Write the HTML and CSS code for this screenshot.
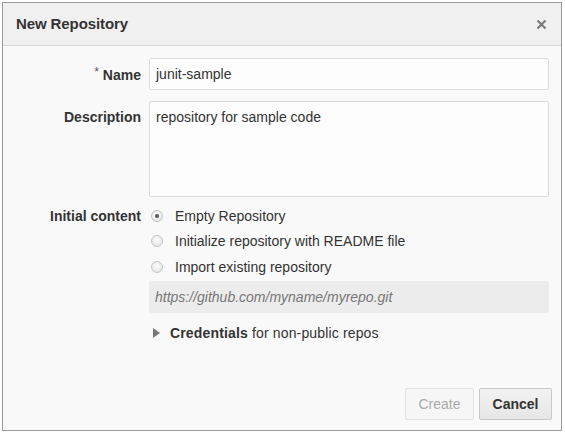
FILE: index.html
```html
<!DOCTYPE html>
<html>
<head>
<meta charset="utf-8">
<link rel="stylesheet" href="styles.css">
</head>
<body>
<div class="dialog">
  <div class="header">
    <span class="title">New Repository</span>
    <svg class="close" width="11" height="11" viewBox="0 0 11 11"><path d="M1.5 1.5 L9.5 9.5 M9.5 1.5 L1.5 9.5" stroke="#7a7a7a" stroke-width="2.2" fill="none"/></svg>
  </div>
  <div class="body">
    <div class="form">
      <label class="label label-name"><span class="req">*</span> Name</label>
      <div class="input">junit-sample</div>

      <label class="label label-desc">Description</label>
      <div class="textarea">repository for sample code</div>

      <label class="label label-init">Initial content</label>
      <div class="options">
        <div class="radio-row"><span class="radio checked"></span><span>Empty Repository</span></div>
        <div class="radio-row"><span class="radio"></span><span>Initialize repository with README file</span></div>
        <div class="radio-row"><span class="radio"></span><span>Import existing repository</span></div>
        <div class="url">https://github.com/myname/myrepo.git</div>
        <div class="creds"><span class="tri"></span><span><b>Credentials</b> for non-public repos</span></div>
      </div>
    </div>
    <div class="buttons">
      <button class="btn disabled">Create</button>
      <button class="btn primary">Cancel</button>
    </div>
  </div>
</div>
</body>
</html>
```
FILE: styles.css
```css
html, body {
  margin: 0;
  padding: 0;
  background: #ffffff;
}
body {
  font-family: "Liberation Sans", Arial, sans-serif;
  color: #333;
  font-size: 14px;
}
.dialog {
  margin: 2px 0 0 2px;
  width: 558px;
  height: 427px;
  border: 1px solid #9a9a9a;
  background: #f9f9f9;
  display: flex;
  flex-direction: column;
}
.header {
  height: 42px;
  background: #f0f0f0;
  border-bottom: 1px solid #d6d6d6;
  display: flex;
  align-items: center;
  justify-content: space-between;
  padding: 0 14px 0 13px;
}
.title {
  font-weight: bold;
  font-size: 15px;
  letter-spacing: -0.1px;
  color: #333;
  position: relative;
  top: -1px;
}
.close {
  display: block;
  position: relative;
  top: 0px;
}
.body {
  flex: 1;
  display: flex;
  flex-direction: column;
  padding: 12px 0 10px 0;
}
.form {
  display: grid;
  grid-template-columns: 138px 400px;
  column-gap: 8px;
  align-items: start;
}
.label {
  font-weight: bold;
  text-align: right;
  color: #333;
}
.label-name { padding-top: 7px; }
.label-desc { padding-top: 8px; margin-top: 11px; }
.label-init { padding-top: 5px; margin-top: 6px; }
.req {
  font-weight: normal;
  font-size: 12px;
  vertical-align: 4px;
  color: #555;
}
.input {
  height: 30px;
  box-sizing: content-box;
  border: 1px solid #dcdcdc;
  border-radius: 2px;
  background: #fdfdfd;
  padding: 0 6px;
  line-height: 30px;
  width: 386px;
}
.textarea {
  margin-top: 11px;
  height: 96px;
  border: 1px solid #dcdcdc;
  border-radius: 2px;
  background: #fdfdfd;
  padding: 7px 6px 0 6px;
  box-sizing: border-box;
  width: 400px;
}
.options {
  margin-top: 6px;
  display: flex;
  flex-direction: column;
}
.radio-row {
  display: flex;
  align-items: center;
  height: 25.5px;
  padding-left: 2px;
  gap: 12px;
}
.radio {
  width: 10px;
  height: 10px;
  border-radius: 50%;
  border: 1px solid #c4c4c4;
  background: radial-gradient(circle at 50% 40%, #fafafa 0%, #e2e2e2 100%);
  position: relative;
  flex: none;
}
.radio.checked::after {
  content: "";
  position: absolute;
  left: 3px;
  top: 3px;
  width: 4px;
  height: 4px;
  border-radius: 50%;
  background: #555;
}
.url {
  margin-top: 1px;
  height: 32px;
  background: #ececec;
  border-radius: 2px;
  line-height: 32px;
  padding: 0 6px;
  font-style: italic;
  color: #777;
}
.creds {
  margin-top: 10px;
  display: flex;
  align-items: center;
  gap: 10px;
  padding-left: 4px;
  height: 20px;
  letter-spacing: 0.15px;
}
.tri {
  width: 0;
  height: 0;
  border-top: 5px solid transparent;
  border-bottom: 5px solid transparent;
  border-left: 7px solid #777;
}
.buttons {
  margin-top: auto;
  display: flex;
  justify-content: flex-end;
  gap: 5px;
  padding-right: 9px;
}
.btn {
  font-family: "Liberation Sans", Arial, sans-serif;
  font-size: 14px;
  height: 32px;
  border-radius: 2px;
  padding: 0 11px;
}
.btn.disabled {
  width: 69px;
  background: #f6f6f6;
  border: 1px solid #e2e2e2;
  color: #aaa;
}
.btn.primary {
  width: 73px;
  background: linear-gradient(#f2f2f2, #e6e6e6);
  border: 1px solid #c8c8c8;
  color: #333;
  font-weight: bold;
}
```
